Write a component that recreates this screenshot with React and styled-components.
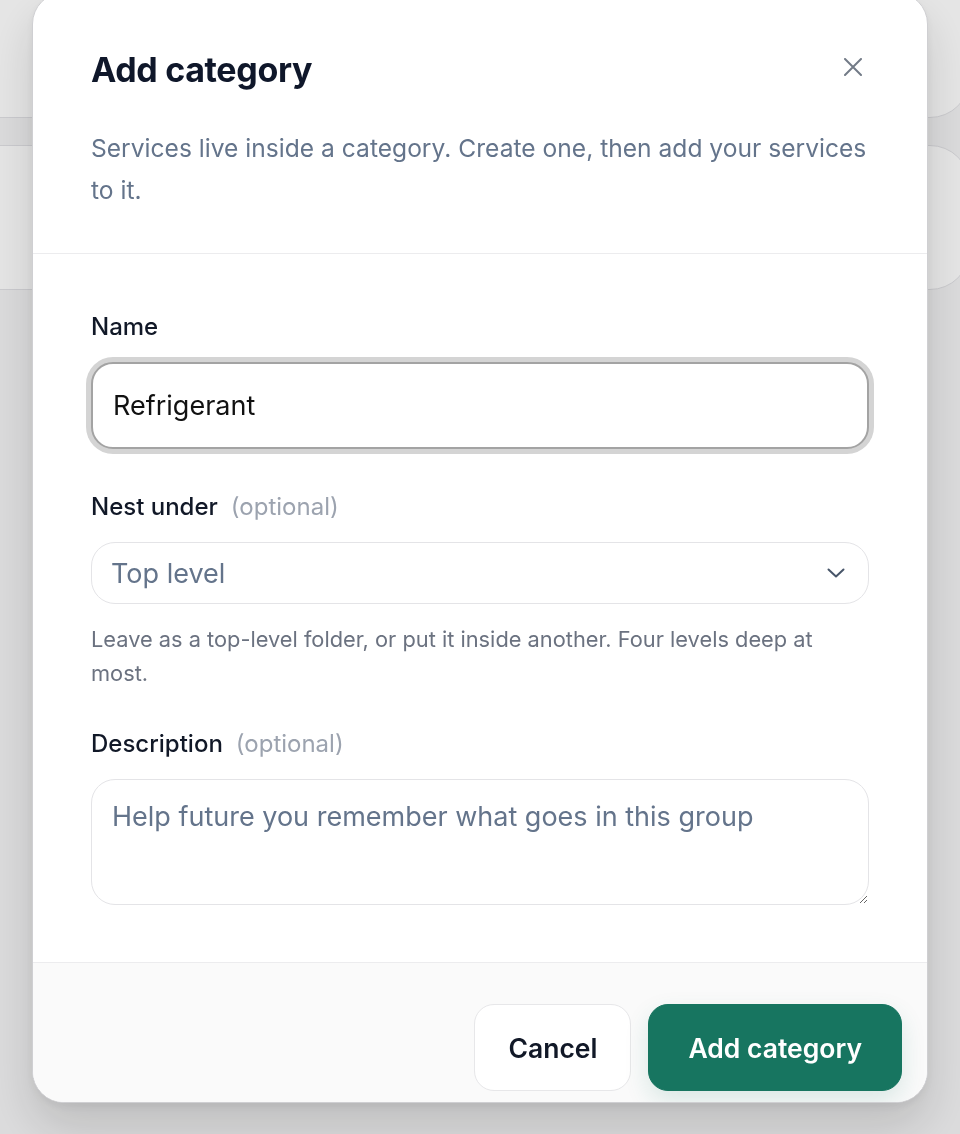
import React from 'react';
import styled, { createGlobalStyle } from 'styled-components';

const GlobalStyle = createGlobalStyle`
    html, body {
        margin : 0;
        padding : 0;
        height : 100%;
        overflow : hidden;
    }
    body {
        background-color : #f4f4f5;
        font-family : 'Inter', 'Noto Sans', sans-serif;
        -webkit-font-smoothing : antialiased;
    }
`

const closeIcon = <svg width="18" height="18" viewBox="0 0 18 18" fill="none" xmlns="http://www.w3.org/2000/svg">
<path d="M1 1L17 17M17 1L1 17" stroke="currentColor" strokeWidth="2" strokeLinecap="round"/>
</svg>

const chevronIcon = <svg width="18" height="10" viewBox="0 0 18 10" fill="none" xmlns="http://www.w3.org/2000/svg">
<path d="M1.5 1.5L9 8.5L16.5 1.5" stroke="currentColor" strokeWidth="2" strokeLinecap="round" strokeLinejoin="round"/>
</svg>

const App = () => {
    return (
    <>
        <GlobalStyle />
        <Page>
            <CardList>
                <BackCard />
                <BackCard />
            </CardList>
        </Page>
        <Overlay>
            <Modal role="dialog" aria-labelledby="add-category-title">
                <Header>
                    <TitleRow>
                        <Title id="add-category-title">Add category</Title>
                        <CloseButton type="button" aria-label="Close">{closeIcon}</CloseButton>
                    </TitleRow>
                    <Lead>Services live inside a category. Create one, then add your services to it.</Lead>
                </Header>
                <Body>
                    <Field $after={42}>
                        <Label htmlFor="cat-name">Name</Label>
                        <TextInput id="cat-name" type="text" defaultValue="Refrigerant" />
                    </Field>
                    <Field $after={38}>
                        <Label htmlFor="cat-parent">Nest under<Optional>(optional)</Optional></Label>
                        <SelectWrap>
                            <Select id="cat-parent" defaultValue="top">
                                <option value="top">Top level</option>
                            </Select>
                            <Chevron>{chevronIcon}</Chevron>
                        </SelectWrap>
                        <Hint>Leave as a top-level folder, or put it inside another. Four levels deep at most.</Hint>
                    </Field>
                    <Field>
                        <Label htmlFor="cat-desc">Description<Optional>(optional)</Optional></Label>
                        <TextArea id="cat-desc" placeholder="Help future you remember what goes in this group" />
                    </Field>
                </Body>
                <Footer>
                    <Button type="button" $variant="ghost">Cancel</Button>
                    <Button type="button" $variant="primary">Add category</Button>
                </Footer>
            </Modal>
        </Overlay>
    </>
    )
}

const Page = styled.div`
    min-height : 100vh;
    overflow : hidden;
`

const CardList = styled.div`
    display : flex;
    flex-direction : column;
    gap : 27px;
    margin : -27px -10px 0 -40px;
`

const BackCard = styled.div`
    height : 145px;
    box-sizing : border-box;
    background-color : #ffffff;
    border : 1px solid #e2e2e6;
    border-radius : 40px;
`

const Overlay = styled.div`
    position : fixed;
    inset : 0;
    background-color : rgba(0, 0, 0, 0.1);
    padding : 0 32px;
`

const Modal = styled.div`
    margin-top : -8px;
    width : 896px;
    box-sizing : border-box;
    background-color : #ffffff;
    border : 1px solid #cfcfd2;
    border-radius : 32px;
    box-shadow : 0 24px 48px rgba(0, 0, 0, 0.14), 0 4px 10px rgba(0, 0, 0, 0.06);
    overflow : hidden;
`

const Header = styled.div`
    padding : 56px 58px 42px;
    border-bottom : 1px solid #ececee;
`

const TitleRow = styled.div`
    display : flex;
    justify-content : space-between;
    align-items : flex-start;
`

const Title = styled.h2`
    margin : 0;
    font-size : 34px;
    line-height : 42px;
    font-weight : 700;
    letter-spacing : -0.01em;
    color : #0f172a;
`

const CloseButton = styled.button`
    width : 32px;
    height : 32px;
    margin-top : 2px;
    padding : 0;
    display : flex;
    align-items : center;
    justify-content : center;
    border : none;
    background : none;
    color : #737b87;
    cursor : pointer;
`

const Lead = styled.p`
    margin : 36px 0 0;
    font-size : 24.6px;
    line-height : 42px;
    color : #64748b;
`

const Body = styled.div`
    padding : 57px 58px;
    display : flex;
    flex-direction : column;
`

const Field = styled.div`
    display : flex;
    flex-direction : column;
    margin-bottom : ${props => props.$after || 0}px;
`

const Label = styled.label`
    display : block;
    margin-bottom : 19px;
    font-size : 24px;
    line-height : 32px;
    font-weight : 500;
    color : #111827;
`

const Optional = styled.span`
    margin-left : 13px;
    font-weight : 400;
    color : #9ca3af;
`

const TextInput = styled.input`
    height : 87px;
    box-sizing : border-box;
    padding : 0 20px;
    font-family : inherit;
    font-size : 27px;
    color : #111111;
    background-color : #ffffff;
    border : 2px solid #a3a3a3;
    border-radius : 22px;
    box-shadow : 0 0 0 5px #d4d4d4;
    outline : none;
`

const SelectWrap = styled.div`
    position : relative;
`

const Select = styled.select`
    width : 100%;
    height : 62px;
    box-sizing : border-box;
    padding : 0 60px 0 19px;
    font-family : inherit;
    font-size : 27px;
    color : #64748b;
    background-color : #ffffff;
    border : 1.5px solid #e4e4e7;
    border-radius : 24px;
    appearance : none;
    outline : none;
`

const Chevron = styled.span`
    position : absolute;
    right : 24px;
    top : 50%;
    transform : translateY(-50%);
    display : flex;
    color : #475569;
    pointer-events : none;
`

const Hint = styled.p`
    margin : 18px 0 0;
    font-size : 21.8px;
    line-height : 34px;
    color : #6b7280;
`

const TextArea = styled.textarea`
    height : 126px;
    box-sizing : border-box;
    padding : 20px 20px;
    font-family : inherit;
    font-size : 27px;
    line-height : 34px;
    color : #111827;
    background-color : #ffffff;
    border : 1.5px solid #e4e4e7;
    border-radius : 24px;
    resize : vertical;
    outline : none;

    &::placeholder {
        color : #64748b;
    }
`

const Footer = styled.div`
    display : flex;
    justify-content : flex-end;
    gap : 17px;
    padding : 41px 25px 11px;
    background-color : #fafafa;
    border-top : 1px solid #ececee;
`

const Button = styled.button`
    height : 87px;
    padding : ${props => props.$variant === 'primary' ? '0 39px' : '0 33px'};
    font-family : inherit;
    font-size : 26.5px;
    font-weight : 600;
    border-radius : 20px;
    cursor : pointer;
    color : ${props => props.$variant === 'primary' ? '#ffffff' : '#111827'};
    background-color : ${props => props.$variant === 'primary' ? '#177560' : '#ffffff'};
    border : ${props => props.$variant === 'primary' ? '1px solid #177560' : '1.5px solid #e7e7e9'};
    box-shadow : ${props => props.$variant === 'primary' ? '0 10px 24px rgba(23, 117, 96, 0.14)' : 'none'};
`

export default App;
